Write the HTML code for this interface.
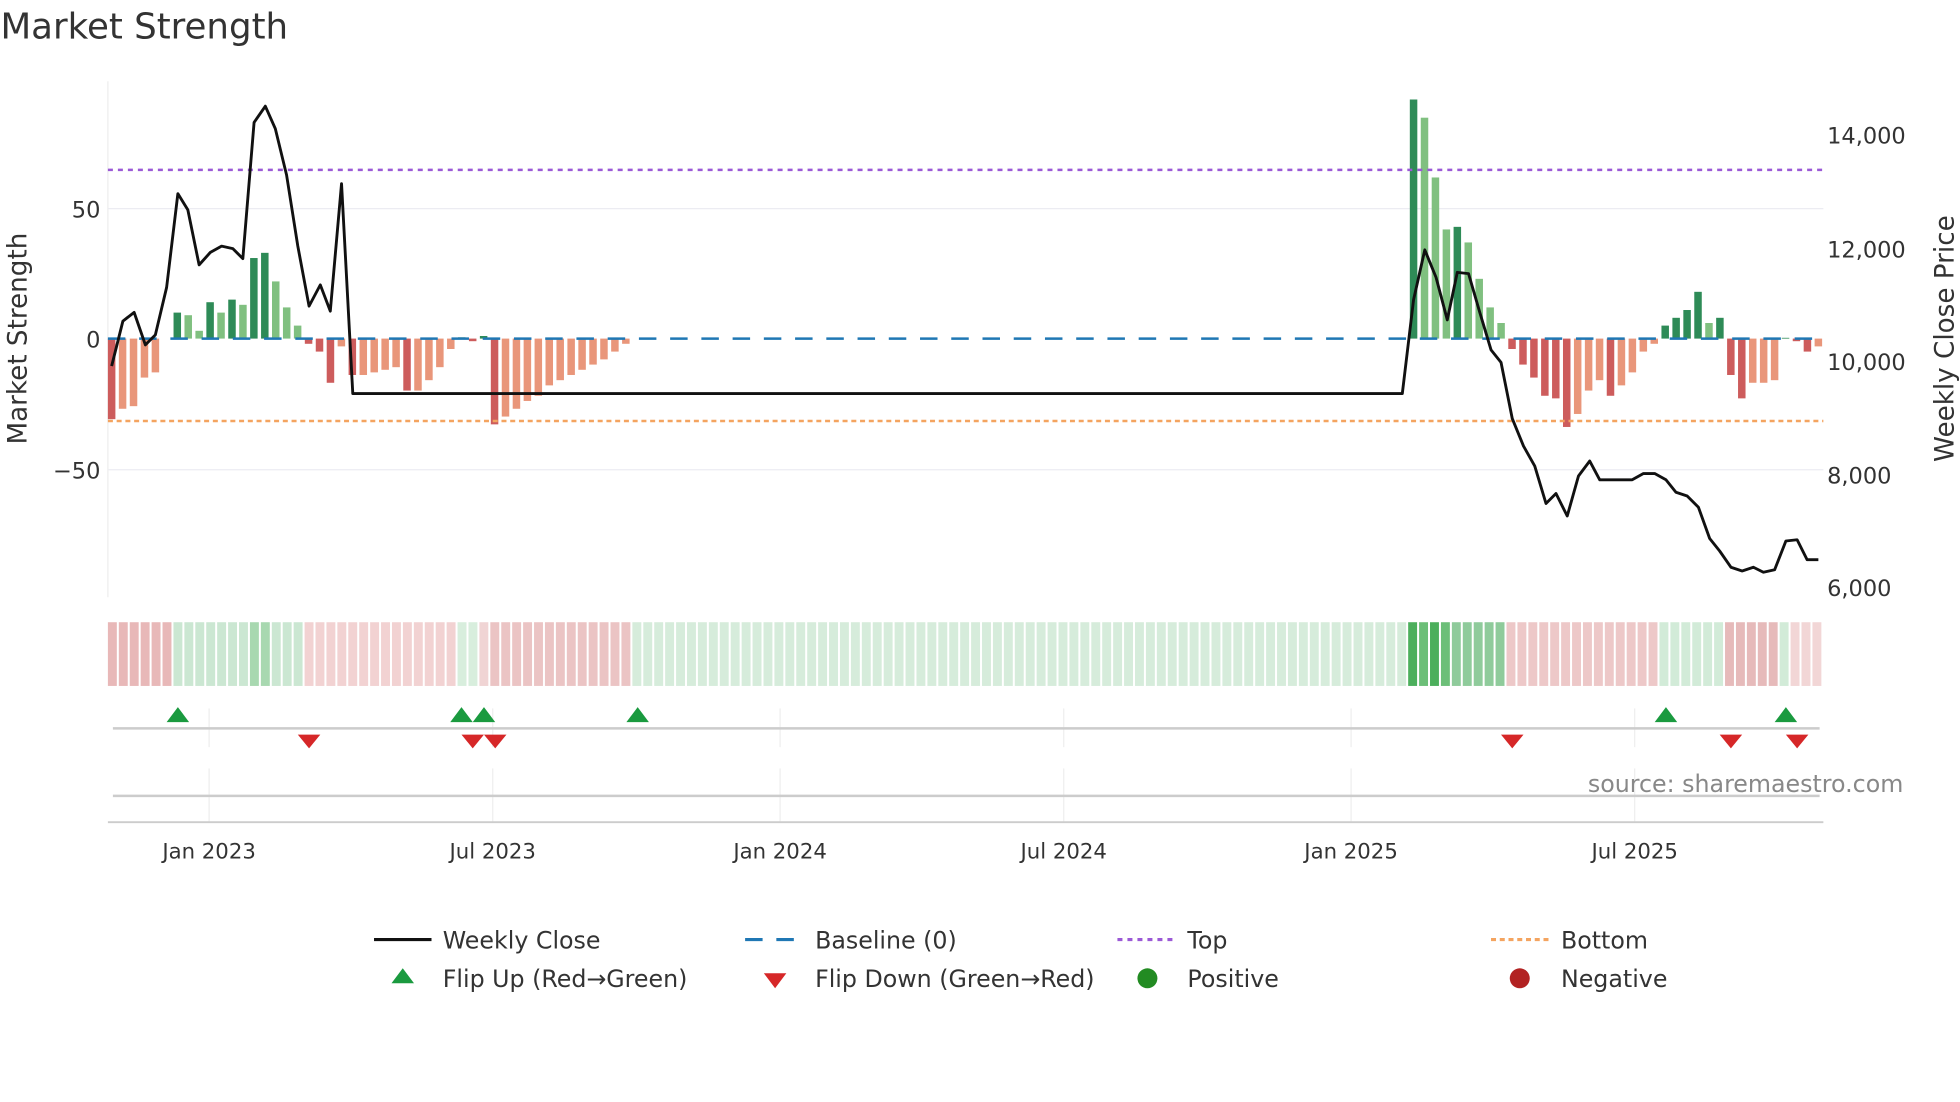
<!DOCTYPE html>
<html><head><meta charset="utf-8"><style>
html,body{margin:0;padding:0;background:#fff;width:1960px;height:1102px;overflow:hidden}
svg{display:block}
text{font-family:"DejaVu Sans","Liberation Sans",sans-serif;fill:#333}
</style></head><body>
<svg id="s" width="1960" height="1102" viewBox="0 0 1568 882" xmlns="http://www.w3.org/2000/svg">
<text x="0" y="31" font-size="28.5" fill="#333">Market Strength</text>
<line x1="86" y1="65" x2="86" y2="478" stroke="#eee"/>
<line x1="86" y1="167" x2="1459" y2="167" stroke="#ececf2"/>
<line x1="86" y1="376" x2="1459" y2="376" stroke="#ececf2"/>
<g id="bars"></g>
<line x1="86" y1="271" x2="1459" y2="271" stroke="#1f77b4" stroke-width="2" stroke-dasharray="14,11"/>
<line x1="86" y1="136" x2="1459" y2="136" stroke="#9b59d6" stroke-width="2" stroke-dasharray="4,4"/>
<line x1="86" y1="337" x2="1459" y2="337" stroke="#f4a460" stroke-width="2" stroke-dasharray="4,3"/>
<polyline id="close" fill="none" stroke="#111" stroke-width="2.3" stroke-linejoin="round"/>
<text x="80" y="174" font-size="18" text-anchor="end">50</text>
<text x="80" y="278" font-size="18" text-anchor="end">0</text>
<text x="80" y="383" font-size="18" text-anchor="end">−50</text>
<text x="1462" y="115" font-size="18">14,000</text>
<text x="1462" y="206" font-size="18">12,000</text>
<text x="1462" y="296" font-size="18">10,000</text>
<text x="1462" y="387" font-size="18">8,000</text>
<text x="1462" y="477" font-size="18">6,000</text>
<text transform="translate(21,271) rotate(-90)" font-size="21" text-anchor="middle">Market Strength</text>
<text transform="translate(1563,271) rotate(-90)" font-size="21" text-anchor="middle">Weekly Close Price</text>
<g id="strip"></g>
<g stroke="#eee">
<line x1="167" y1="567" x2="167" y2="598"/><line x1="394" y1="567" x2="394" y2="598"/><line x1="624" y1="567" x2="624" y2="598"/><line x1="851" y1="567" x2="851" y2="598"/><line x1="1081" y1="567" x2="1081" y2="598"/><line x1="1308" y1="567" x2="1308" y2="598"/>
<line x1="167" y1="615" x2="167" y2="658"/><line x1="394" y1="615" x2="394" y2="658"/><line x1="624" y1="615" x2="624" y2="658"/><line x1="851" y1="615" x2="851" y2="658"/><line x1="1081" y1="615" x2="1081" y2="658"/><line x1="1308" y1="615" x2="1308" y2="658"/>
</g>
<line x1="90" y1="583" x2="1456" y2="583" stroke="#ccc" stroke-width="2"/>
<line x1="90" y1="637" x2="1456" y2="637" stroke="#ccc" stroke-width="2"/>
<line x1="86" y1="658" x2="1459" y2="658" stroke="#ccc" stroke-width="1.5"/>
<g id="mk"></g>
<text x="1523" y="634" font-size="19" text-anchor="end" style="fill:#888">source: sharemaestro.com</text>
<g font-size="17" text-anchor="middle">
<text x="167" y="687">Jan 2023</text><text x="394" y="687">Jul 2023</text><text x="624" y="687">Jan 2024</text><text x="851" y="687">Jul 2024</text><text x="1081" y="687">Jan 2025</text><text x="1308" y="687">Jul 2025</text>
</g>
<g font-size="19">
<line x1="299" y1="752" x2="345" y2="752" stroke="#111" stroke-width="2.5"/><text x="354" y="759">Weekly Close</text>
<line x1="596" y1="752" x2="642" y2="752" stroke="#1f77b4" stroke-width="2.5" stroke-dasharray="14,11"/><text x="652" y="759">Baseline (0)</text>
<line x1="894" y1="752" x2="940" y2="752" stroke="#9b59d6" stroke-width="2.5" stroke-dasharray="4,4"/><text x="950" y="759">Top</text>
<line x1="1193" y1="752" x2="1239" y2="752" stroke="#f4a460" stroke-width="2.5" stroke-dasharray="4,3"/><text x="1249" y="759">Bottom</text>
<polygon points="313,787 331,787 322,775" fill="#1a9a3f"/><text x="354" y="790">Flip Up (Red→Green)</text>
<polygon points="611,779 629,779 620,791" fill="#d62728"/><text x="652" y="790">Flip Down (Green→Red)</text>
<circle cx="918" cy="783" r="8" fill="#228b22"/><text x="950" y="790">Positive</text>
<circle cx="1216" cy="783" r="8" fill="#b22222"/><text x="1249" y="790">Negative</text>
</g>
</svg>
<script>
var NS="http://www.w3.org/2000/svg";
function el(p,t,a){var e=document.createElementNS(NS,t);for(var k in a)e.setAttribute(k,a[k]);p.appendChild(e);return e;}
var v=[-31,-27,-26,-15,-13,0,10,9,3,14,10,15,13,31,33,22,12,5,-2,-5,-17,-3,-14,-14,-13,-12,-11,-20,-20,-16,-11,-4,0.5,-1,1,-33,-30,-27,-24,-22,-18,-16,-14,-12,-10,-8,-5,-2];
var N;while(v.length<119)v.push(0);
var tail=[92,85,62,42,43,37,23,12,6,-4,-10,-15,-22,-23,-34,-29,-20,-16,-22,-18,-13,-5,-2,5,8,11,18,6,8,-14,-23,-17,-17,-16,0.3,-1,-5,-3];
v=v.concat(tail);N=v.length;
var x0=89,dx=(1455-89)/(N-1);
var g=document.getElementById('bars');
for(var i=0;i<N;i++){var val=v[i];if(Math.abs(val)<0.2)continue;var x=x0+i*dx,h=Math.abs(val)*2.08;var prev=i?v[i-1]:0;var c;
if(val>0)c=(val>prev)?"#2e8b57":"#80c080";else c=(val<prev)?"#cd5c5c":"#e9967a";
el(g,'rect',{x:x-3,y:val>0?271-h:271,width:6,height:h,fill:c});}
var s=document.getElementById('strip');
var regs=[[86,137,"#e8b8b8"],[138,243,"#cbe7d2"],[244,365,"#f2d2d2"],[366,383,"#d8eedd"],[384,392,"#f0d4d4"],[393,505,"#ebc4c4"],[506,1127,"#d6ecdb"],[1128,1206,"#8fcb9b"],[1207,1328,"#edc8c8"],[1329,1380,"#d2ebd8"],[1381,1425,"#e6baba"],[1426,1433,"#d2ebd8"],[1434,1459,"#f2d6d6"]];
var sw=(1459-86)/N;
for(var i=0;i<N;i++){var x=86+i*sw,cx=x+sw/2,c="#ddd";for(var r of regs)if(cx>=r[0]&&cx<=r[1]+1)c=r[2];
if(cx>1128&&cx<1160)c=(i%2)?"#4caf5c":"#6cbf78";if(cx>200&&cx<217)c="#a8d8b0";
el(s,'rect',{x:x,y:498,width:sw-1.6,height:51,fill:c});}
var pts="89,293 98,257 107,250 116,276 124,268 133,230 142,155 150,168 159,212 168,202 177,197 186,199 194,207 203,98 212,85 220,103 229,140 238,197 247,245 256,228 264,249 273,147 282,315 1122,315 1131,240 1140,200 1149,222 1158,256 1166,218 1175,219 1184,250 1193,280 1201,290 1210,335 1219,357 1228,373 1237,403 1245,395 1254,413 1263,381 1272,369 1280,384 1306,384 1315,379 1324,379 1333,384 1341,394 1350,397 1359,406 1368,431 1376,441 1385,454 1394,457 1403,454 1411,458 1420,456 1429,433 1438,432 1446,448 1455,448";
document.getElementById('close').setAttribute('points',pts);
var m=document.getElementById('mk');
[142,369,387,510,1333,1429].forEach(function(x){el(m,'polygon',{points:(x-9)+",578 "+(x+9)+",578 "+x+",566",fill:"#1a9a3f"});});
[247,378,396,1210,1385,1438].forEach(function(x){el(m,'polygon',{points:(x-9)+",588 "+(x+9)+",588 "+x+",599",fill:"#d62728"});});
</script>
</body></html>
